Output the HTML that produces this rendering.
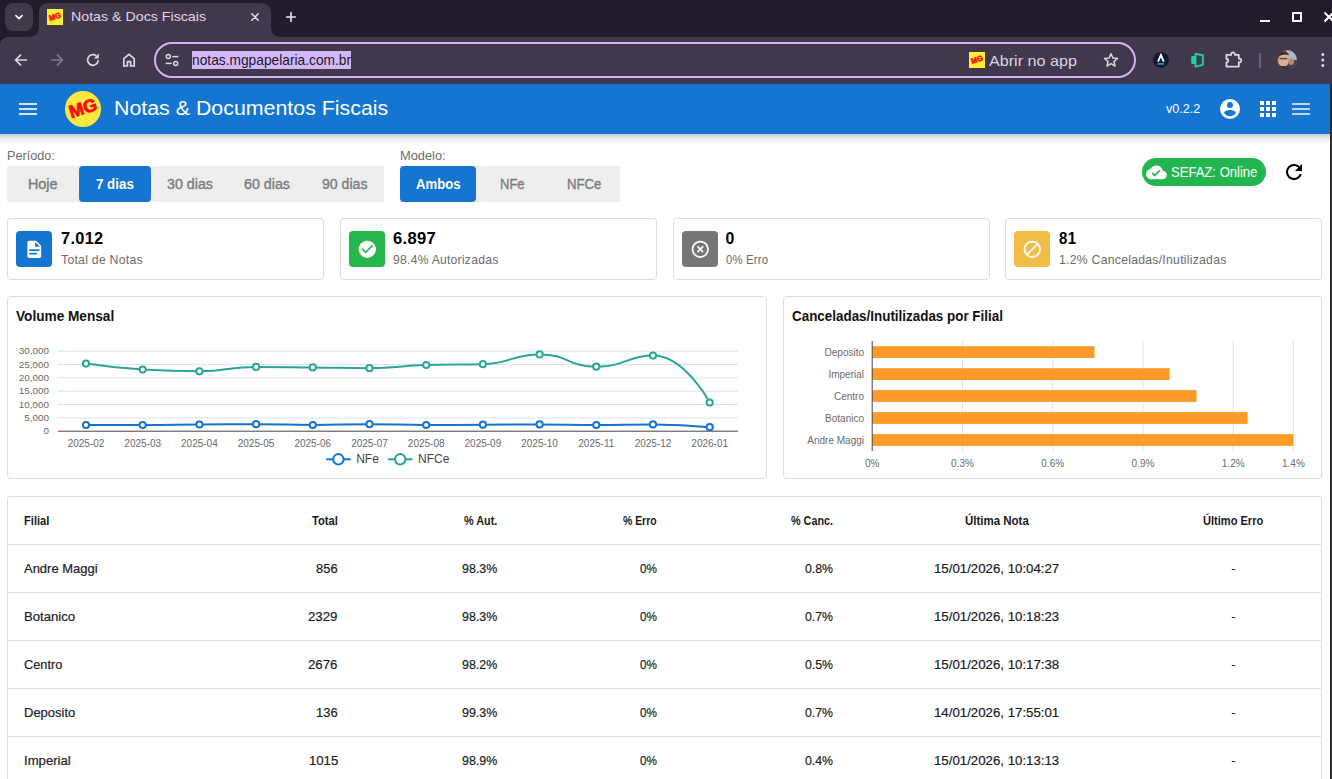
<!DOCTYPE html>
<html lang="pt-BR"><head><meta charset="utf-8"><title>Notas &amp; Docs Fiscais</title>
<style>
*{box-sizing:border-box;margin:0;padding:0}
html,body{width:1332px;height:779px;overflow:hidden;background:#fff;font-family:"Liberation Sans",Arial,sans-serif}
body{position:relative}
.a{position:absolute}
.t{position:absolute;white-space:pre;line-height:20px;height:20px;transform-origin:0 50%}
svg{position:absolute;overflow:visible}
.card{position:absolute;background:#fff;border:1px solid #dcdcdc;border-radius:4px}
.ib{position:absolute;width:36px;height:36px;border-radius:4px;top:231px}
.hl{position:absolute;left:8px;width:1313px;height:1px;background:#dfdfdf}
svg text{font-family:"Liberation Sans",Arial,sans-serif}

</style></head>
<body>
<div class="a" style="left:0;top:0;width:1332px;height:48px;background:#231b2c"></div>
<div class="a" style="left:0;top:37px;width:1340px;height:47px;background:#41384b;border-radius:8px 0 0 0"></div>
<div class="a" style="left:5px;top:3px;width:28px;height:28px;border-radius:8px;background:#41384b"></div>
<svg style="left:13px;top:11px" width="12" height="12" viewBox="0 0 12 12"><path d="M2.9 4.6 6 7.6 9.1 4.6" fill="none" stroke="#fff" stroke-width="1.6" stroke-linecap="round" stroke-linejoin="round"/></svg>
<svg style="left:29px;top:3px" width="254" height="34.5" viewBox="0 0 254 34.5" preserveAspectRatio="none"><path d="M0 34 C6 34 10 30 10 24 V10 C10 4 14 0 20 0 H232 C238 0 242 4 242 10 V24 C242 30 246 34 252 34 Z" fill="#41384b"/></svg>
<svg style="left:47px;top:9px" width="16" height="16" viewBox="0 0 16 16"><rect width="16" height="16" fill="#ffee33"/><g transform="rotate(-18 8 7.5)"><text x="8" y="10.3" font-size="7.8" font-weight="700" fill="#f51010" stroke="#f51010" stroke-width=".55" text-anchor="middle" textLength="12.2" lengthAdjust="spacingAndGlyphs">MG</text></g></svg>
<svg style="left:250px;top:12px" width="10" height="10" viewBox="0 0 10 10"><path d="M1.8 1.8 8.2 8.2M8.2 1.8 1.8 8.2" stroke="#e9e1f0" stroke-width="1.5" stroke-linecap="round"/></svg>
<svg style="left:285px;top:11px" width="12" height="12" viewBox="0 0 12 12"><path d="M6 1.6V10.4M1.6 6H10.4" stroke="#ece5f2" stroke-width="1.6" stroke-linecap="round"/></svg>
<div class="a" style="left:1260px;top:20px;width:10px;height:2px;background:#fff"></div>
<div class="a" style="left:1292px;top:12px;width:10px;height:10px;border:2px solid #fff"></div>
<svg style="left:1324.2px;top:12px" width="10" height="10" viewBox="0 0 10 10"><path d="M0.5 0.5 9.5 9.5M9.5 0.5 0.5 9.5" stroke="#fff" stroke-width="2"/></svg>
<svg style="left:13px;top:52px" width="16" height="16" viewBox="0 0 16 16"><path d="M14 8H2.8M8 2.6 2.6 8 8 13.4" fill="none" stroke="#ded6e6" stroke-width="1.7" stroke-linejoin="miter"/></svg>
<svg style="left:49px;top:52px" width="16" height="16" viewBox="0 0 16 16"><path d="M2 8H13.2M8 2.6 13.4 8 8 13.4" fill="none" stroke="#80778b" stroke-width="1.7"/></svg>
<svg style="left:85px;top:52px" width="16" height="16" viewBox="0 0 16 16"><path d="M13.2 8A5.3 5.3 0 1 1 11.3 3.9" fill="none" stroke="#ded6e6" stroke-width="1.7"/><path d="M13.8 1.6V6.6H8.8Z" fill="#ded6e6"/></svg>
<svg style="left:121px;top:52px" width="16" height="16" viewBox="0 0 16 16"><path d="M2.8 14V6.6L8 2.4 13.2 6.6V14H9.6V9.6H6.4V14Z" fill="none" stroke="#ded6e6" stroke-width="1.7" stroke-linejoin="miter"/></svg>
<div class="a" style="left:154px;top:42px;width:982px;height:36px;border-radius:18px;border:2px solid #d2b3f7;background:#41384b"></div>
<svg style="left:164px;top:52px" width="16" height="16" viewBox="0 0 16 16"><g fill="none" stroke="#ded6e6" stroke-width="1.5"><circle cx="4.3" cy="4.6" r="2"/><path d="M8.3 4.6H14.3"/><circle cx="11.7" cy="11.4" r="2"/><path d="M1.7 11.4H7.7"/></g></svg>
<div class="a" style="left:192px;top:51px;width:159px;height:18px;background:#d4b9fa"></div>
<svg style="left:969px;top:52px" width="16" height="16" viewBox="0 0 16 16"><rect width="16" height="16" fill="#ffee33"/><g transform="rotate(-18 8 7.5)"><text x="8" y="10.3" font-size="7.8" font-weight="700" fill="#f51010" stroke="#f51010" stroke-width=".55" text-anchor="middle" textLength="12.2" lengthAdjust="spacingAndGlyphs">MG</text></g></svg>
<svg style="left:1102px;top:51px" width="18" height="18" viewBox="0 0 24 24"><path d="M12 3.6 14.5 9.3 20.7 9.9 16 14 17.4 20.1 12 16.9 6.6 20.1 8 14 3.3 9.9 9.5 9.3Z" fill="none" stroke="#ded6e6" stroke-width="2" stroke-linejoin="round"/></svg>
<svg style="left:1152px;top:51px" width="18" height="18" viewBox="0 0 18 18"><circle cx="8.9" cy="8.9" r="8" fill="#0f1930"/><path d="M6 10.7 8.9 4.2 11.8 10.7" fill="none" stroke="#fff" stroke-width="1.9" stroke-linejoin="miter"/><path d="M5.6 12.9H12.2" stroke="#2f9fe4" stroke-width="1.6"/></svg>
<svg style="left:1188px;top:51px" width="18" height="18" viewBox="0 0 18 18"><path d="M7.5 2.8 14.8 4.2V13.8L7.5 15.6Z" fill="none" stroke="#1fd19b" stroke-width="1.9" stroke-linejoin="round"/><rect x="3.2" y="4.9" width="4.6" height="8" rx="1.2" fill="#1fd19b"/></svg>
<svg style="left:1224px;top:50px" width="20" height="20" viewBox="0 0 20 20"><path d="M2.4 4.9H7.2a1.9 1.9 0 1 1 3.6 0H14.8V8.7a1.9 1.9 0 1 1 0 3.6V16.6H2.4V12.6a1.8 1.8 0 0 0 0-3.6Z" fill="none" stroke="#ded6e6" stroke-width="1.8" stroke-linejoin="round"/></svg>
<div class="a" style="left:1259.3px;top:52.5px;width:1.4px;height:15px;background:#6b6078"></div>
<svg style="left:1277px;top:50px" width="20" height="20" viewBox="0 0 20 20"><defs><clipPath id="av"><circle cx="10" cy="10" r="10"/></clipPath></defs><g clip-path="url(#av)"><rect width="20" height="20" fill="#6e5a55"/><rect x="9.5" y="0" width="10.5" height="10" fill="#a8b9c4"/><path d="M10 10H20V20H8Z" fill="#4b3f46"/><ellipse cx="6.6" cy="10.2" rx="5.4" ry="6.6" fill="#dcae97"/><path d="M0 6.5C1.5 1 10 .2 12.2 5.2 9 3.8 4 4.2 0 8Z" fill="#3b2c2a"/><path d="M2.4 8.6H10.2" stroke="#5a4038" stroke-width="1.1"/><ellipse cx="14.2" cy="11.8" rx="2.8" ry="3.2" fill="#b58a78"/><path d="M0 20V17.5C3 15.5 9 15.5 12 18V20Z" fill="#3a3038"/></g></svg>
<svg style="left:1320px;top:51px" width="6" height="18" viewBox="0 0 6 18"><circle cx="2.8" cy="3.4" r="1.5" fill="#ded6e6"/><circle cx="2.8" cy="8.9" r="1.5" fill="#ded6e6"/><circle cx="2.8" cy="14.5" r="1.5" fill="#ded6e6"/></svg>
<div class="a" style="left:0;top:84px;width:1330px;height:50px;background:#1576d1"></div>
<div class="a" style="left:0;top:134px;width:1330px;height:11px;background:linear-gradient(to bottom,rgba(0,0,0,.2) 0,rgba(0,0,0,.13) 25%,rgba(0,0,0,.06) 55%,rgba(0,0,0,.02) 80%,rgba(0,0,0,0) 100%)"></div>
<svg style="left:16px;top:97px" width="24" height="24" viewBox="0 0 24 24"><path d="M3,6H21V8H3V6M3,11H21V13H3V11M3,16H21V18H3V16Z" fill="#fff" fill-opacity=".82"/></svg>
<svg style="left:65px;top:91px" width="36" height="36" viewBox="0 0 36 36"><circle cx="18" cy="18" r="18" fill="#ffe83b"/><g transform="rotate(-18 18 17.6)"><text x="18" y="23.2" font-size="17.6" font-weight="700" fill="#f70f12" stroke="#f70f12" stroke-width=".8" text-anchor="middle" textLength="28.5" lengthAdjust="spacingAndGlyphs">MG</text></g></svg>
<svg style="left:1218px;top:97px" width="24" height="24" viewBox="0 0 24 24"><path d="M12,19.2C9.5,19.2 7.29,17.92 6,16C6.03,14 10,12.9 12,12.9C14,12.9 17.97,14 18,16C16.71,17.92 14.5,19.2 12,19.2M12,5A3,3 0 0,1 15,8A3,3 0 0,1 12,11A3,3 0 0,1 9,8A3,3 0 0,1 12,5M12,2A10,10 0 0,0 2,12A10,10 0 0,0 12,22A10,10 0 0,0 22,12C22,6.47 17.5,2 12,2Z" fill="#fff"/></svg>
<svg style="left:1255.5px;top:97px" width="24" height="24" viewBox="0 0 24 24"><path d="M16,20H20V16H16M16,14H20V10H16M10,8H14V4H10M16,8H20V4H16M10,14H14V10H10M4,14H8V10H4M4,20H8V16H4M10,20H14V16H10M4,8H8V4H4V8Z" fill="#fff"/></svg>
<svg style="left:1289px;top:97px" width="24" height="24" viewBox="0 0 24 24"><path d="M3,6H21V8H3V6M3,11H21V13H3V11M3,16H21V18H3V16Z" fill="#fff" fill-opacity=".72"/></svg>
<div class="a" style="left:1330px;top:84px;width:2px;height:695px;background:#2a2a2a"></div>
<div class="a" style="left:7px;top:166px;width:377px;height:36px;background:#eeeeee"></div>
<div class="a" style="left:79px;top:166px;width:72px;height:36px;background:#1576d1;border-radius:4px"></div>
<div class="a" style="left:400px;top:166px;width:220px;height:36px;background:#eeeeee"></div>
<div class="a" style="left:400px;top:166px;width:76px;height:36px;background:#1576d1;border-radius:4px"></div>
<div class="a" style="left:1142px;top:158px;width:124px;height:28px;border-radius:14px;background:#22b650"></div>
<svg style="left:1146.4px;top:161.8px" width="20.8" height="20.8" viewBox="0 0 24 24"><path d="M10,17L6.5,13.5L7.91,12.08L10,14.17L15.18,9L16.59,10.41M19.35,10.03C18.67,6.59 15.64,4 12,4C9.11,4 6.6,5.64 5.35,8.03C2.34,8.36 0,10.9 0,14A6,6 0 0,0 6,20H19A5,5 0 0,0 24,15C24,12.36 21.95,10.22 19.35,10.03Z" fill="#fff" fill-rule="evenodd"/></svg>
<svg style="left:1282px;top:160px" width="24" height="24" viewBox="0 0 24 24"><path d="M17.65,6.35C16.2,4.9 14.21,4 12,4A8,8 0 0,0 4,12A8,8 0 0,0 12,20C15.73,20 18.84,17.45 19.73,14H17.65C16.83,16.33 14.61,18 12,18A6,6 0 0,1 6,12A6,6 0 0,1 12,6C13.66,6 15.14,6.69 16.22,7.78L13,11H20V4L17.65,6.35Z" fill="#000"/></svg>
<div class="card" style="left:7px;top:218px;width:317px;height:62px"></div>
<div class="ib" style="left:16px;background:#1576d1"></div>
<svg style="left:23.7px;top:238.7px" width="20.6" height="20.6" viewBox="0 0 24 24"><path d="M13,9H18.5L13,3.5V9M6,2H14L20,8V20A2,2 0 0,1 18,22H6C4.89,22 4,21.1 4,20V4C4,2.89 4.89,2 6,2M15,18V16H6V18H15M18,14V12H6V14H18Z" fill="#fff" fill-rule="evenodd"/></svg>
<div class="card" style="left:340px;top:218px;width:317px;height:62px"></div>
<div class="ib" style="left:349px;background:#27b64d"></div>
<svg style="left:356.7px;top:238.7px" width="20.6" height="20.6" viewBox="0 0 24 24"><path d="M12 2C6.5 2 2 6.5 2 12S6.5 22 12 22 22 17.5 22 12 17.5 2 12 2M10 17L5 12L6.41 10.59L10 14.17L17.59 6.58L19 8L10 17Z" fill="#fff" fill-rule="evenodd"/></svg>
<div class="card" style="left:673px;top:218px;width:317px;height:62px"></div>
<div class="ib" style="left:682px;background:#767676"></div>
<svg style="left:689.7px;top:238.7px" width="20.6" height="20.6" viewBox="0 0 24 24"><path d="M12,20C7.59,20 4,16.41 4,12C4,7.59 7.59,4 12,4C16.41,4 20,7.59 20,12C20,16.41 16.41,20 12,20M12,2C6.47,2 2,6.47 2,12C2,17.53 6.47,22 12,22C17.53,22 22,17.53 22,12C22,6.47 17.53,2 12,2M14.59,8L12,10.59L9.41,8L8,9.41L10.59,12L8,14.59L9.41,16L12,13.41L14.59,16L16,14.59L13.41,12L16,9.41L14.59,8Z" fill="#fff" fill-rule="evenodd"/></svg>
<div class="card" style="left:1005px;top:218px;width:317px;height:62px"></div>
<div class="ib" style="left:1014px;background:#f0be48"></div>
<svg style="left:1021.7px;top:238.7px" width="20.6" height="20.6" viewBox="0 0 24 24"><path d="M12 2C17.5 2 22 6.5 22 12S17.5 22 12 22 2 17.5 2 12 6.5 2 12 2M12 4C10.1 4 8.4 4.6 7.1 5.7L18.3 16.9C19.3 15.5 20 13.8 20 12C20 7.6 16.4 4 12 4M16.9 18.3L5.7 7.1C4.6 8.4 4 10.1 4 12C4 16.4 7.6 20 12 20C13.9 20 15.6 19.4 16.9 18.3Z" fill="#fff" fill-rule="evenodd" transform="translate(24 0) scale(-1 1)"/></svg>
<div class="card" style="left:7px;top:296px;width:760px;height:183px"></div>
<div class="card" style="left:783px;top:296px;width:539px;height:183px"></div>
<svg style="left:0;top:0" width="1332" height="779" viewBox="0 0 1332 779">
<path d="M58 417.9H738" stroke="#dde1e9" stroke-width="1" fill="none"/>
<path d="M58 404.5H738" stroke="#dde1e9" stroke-width="1" fill="none"/>
<path d="M58 391.2H738" stroke="#dde1e9" stroke-width="1" fill="none"/>
<path d="M58 377.9H738" stroke="#dde1e9" stroke-width="1" fill="none"/>
<path d="M58 364.5H738" stroke="#dde1e9" stroke-width="1" fill="none"/>
<path d="M58 351.2H738" stroke="#dde1e9" stroke-width="1" fill="none"/>
<path d="M58 431.2H738" stroke="#444" stroke-width="1" fill="none"/>
<text x="48.9" y="434.4" font-size="9.9" fill="#6a6a6a" text-anchor="end">0</text>
<text x="48.9" y="421.1" font-size="9.9" fill="#6a6a6a" text-anchor="end">5,000</text>
<text x="48.9" y="407.7" font-size="9.9" fill="#6a6a6a" text-anchor="end">10,000</text>
<text x="48.9" y="394.4" font-size="9.9" fill="#6a6a6a" text-anchor="end">15,000</text>
<text x="48.9" y="381.1" font-size="9.9" fill="#6a6a6a" text-anchor="end">20,000</text>
<text x="48.9" y="367.7" font-size="9.9" fill="#6a6a6a" text-anchor="end">25,000</text>
<text x="48.9" y="354.4" font-size="9.9" fill="#6a6a6a" text-anchor="end">30,000</text>
<text x="86.0" y="447.1" font-size="10" fill="#6a6a6a" text-anchor="middle">2025-02</text>
<text x="142.7" y="447.1" font-size="10" fill="#6a6a6a" text-anchor="middle">2025-03</text>
<text x="199.4" y="447.1" font-size="10" fill="#6a6a6a" text-anchor="middle">2025-04</text>
<text x="256.1" y="447.1" font-size="10" fill="#6a6a6a" text-anchor="middle">2025-05</text>
<text x="312.8" y="447.1" font-size="10" fill="#6a6a6a" text-anchor="middle">2025-06</text>
<text x="369.5" y="447.1" font-size="10" fill="#6a6a6a" text-anchor="middle">2025-07</text>
<text x="426.2" y="447.1" font-size="10" fill="#6a6a6a" text-anchor="middle">2025-08</text>
<text x="482.9" y="447.1" font-size="10" fill="#6a6a6a" text-anchor="middle">2025-09</text>
<text x="539.6" y="447.1" font-size="10" fill="#6a6a6a" text-anchor="middle">2025-10</text>
<text x="596.3" y="447.1" font-size="10" fill="#6a6a6a" text-anchor="middle">2025-11</text>
<text x="653.0" y="447.1" font-size="10" fill="#6a6a6a" text-anchor="middle">2025-12</text>
<text x="709.7" y="447.1" font-size="10" fill="#6a6a6a" text-anchor="middle">2026-01</text>
<path d="M86.0 425.0C86.0 425.0 114.4 425.0 142.7 425.0C171.1 425.0 171.0 424.7 199.4 424.5C227.7 424.3 227.8 424.2 256.1 424.2C284.5 424.2 284.5 425.0 312.8 425.0C341.1 425.0 341.1 424.2 369.5 424.2C397.9 424.2 397.8 425.0 426.2 425.0C454.5 425.0 454.6 424.9 482.9 424.7C511.2 424.5 511.3 424.4 539.6 424.4C568.0 424.4 568.0 425.0 596.3 425.0C624.6 425.0 624.7 424.4 653.0 424.4C681.4 424.4 709.7 427.2 709.7 427.2" fill="none" stroke="#1673d6" stroke-width="2" stroke-linejoin="round"/>
<circle cx="86.0" cy="425.0" r="3.1" fill="#fff" stroke="#1673d6" stroke-width="2"/>
<circle cx="142.7" cy="425.0" r="3.1" fill="#fff" stroke="#1673d6" stroke-width="2"/>
<circle cx="199.4" cy="424.5" r="3.1" fill="#fff" stroke="#1673d6" stroke-width="2"/>
<circle cx="256.1" cy="424.2" r="3.1" fill="#fff" stroke="#1673d6" stroke-width="2"/>
<circle cx="312.8" cy="425.0" r="3.1" fill="#fff" stroke="#1673d6" stroke-width="2"/>
<circle cx="369.5" cy="424.2" r="3.1" fill="#fff" stroke="#1673d6" stroke-width="2"/>
<circle cx="426.2" cy="425.0" r="3.1" fill="#fff" stroke="#1673d6" stroke-width="2"/>
<circle cx="482.9" cy="424.7" r="3.1" fill="#fff" stroke="#1673d6" stroke-width="2"/>
<circle cx="539.6" cy="424.4" r="3.1" fill="#fff" stroke="#1673d6" stroke-width="2"/>
<circle cx="596.3" cy="425.0" r="3.1" fill="#fff" stroke="#1673d6" stroke-width="2"/>
<circle cx="653.0" cy="424.4" r="3.1" fill="#fff" stroke="#1673d6" stroke-width="2"/>
<circle cx="709.7" cy="427.2" r="3.1" fill="#fff" stroke="#1673d6" stroke-width="2"/>
<path d="M86.0 363.6C86.0 363.6 114.3 367.9 142.7 369.6C171.0 371.3 171.1 371.3 199.4 371.3C227.8 371.3 227.7 366.9 256.1 366.9C284.4 366.9 284.5 367.1 312.8 367.4C341.2 367.7 341.2 368.2 369.5 368.2C397.9 368.2 397.8 365.8 426.2 365.0C454.5 364.2 454.8 365.0 482.9 364.2C511.5 363.4 511.4 354.4 539.6 354.4C568.1 354.4 567.9 366.7 596.3 366.7C624.6 366.7 628.1 355.6 653.0 355.6C684.8 355.6 709.7 402.5 709.7 402.5" fill="none" stroke="#2aa597" stroke-width="2" stroke-linejoin="round"/>
<circle cx="86.0" cy="363.6" r="3.1" fill="#fff" stroke="#2aa597" stroke-width="2"/>
<circle cx="142.7" cy="369.6" r="3.1" fill="#fff" stroke="#2aa597" stroke-width="2"/>
<circle cx="199.4" cy="371.3" r="3.1" fill="#fff" stroke="#2aa597" stroke-width="2"/>
<circle cx="256.1" cy="366.9" r="3.1" fill="#fff" stroke="#2aa597" stroke-width="2"/>
<circle cx="312.8" cy="367.4" r="3.1" fill="#fff" stroke="#2aa597" stroke-width="2"/>
<circle cx="369.5" cy="368.2" r="3.1" fill="#fff" stroke="#2aa597" stroke-width="2"/>
<circle cx="426.2" cy="365.0" r="3.1" fill="#fff" stroke="#2aa597" stroke-width="2"/>
<circle cx="482.9" cy="364.2" r="3.1" fill="#fff" stroke="#2aa597" stroke-width="2"/>
<circle cx="539.6" cy="354.4" r="3.1" fill="#fff" stroke="#2aa597" stroke-width="2"/>
<circle cx="596.3" cy="366.7" r="3.1" fill="#fff" stroke="#2aa597" stroke-width="2"/>
<circle cx="653.0" cy="355.6" r="3.1" fill="#fff" stroke="#2aa597" stroke-width="2"/>
<circle cx="709.7" cy="402.5" r="3.1" fill="#fff" stroke="#2aa597" stroke-width="2"/>
<path d="M326.2 459.3H350.7" stroke="#1673d6" stroke-width="2"/>
<circle cx="338.4" cy="459.3" r="5.2" fill="#fff" stroke="#1673d6" stroke-width="2"/>
<text x="356.2" y="463.4" font-size="12" fill="#444">NFe</text>
<path d="M388.0 459.3H412.5" stroke="#2aa597" stroke-width="2"/>
<circle cx="400.2" cy="459.3" r="5.2" fill="#fff" stroke="#2aa597" stroke-width="2"/>
<text x="418.0" y="463.4" font-size="12" fill="#444">NFCe</text>
<text x="872.2" y="467.1" font-size="10" fill="#6a6a6a" text-anchor="middle">0%</text>
<path d="M962.5 341V451" stroke="#dde1e9" stroke-width="1" fill="none"/>
<text x="962.5" y="467.1" font-size="10" fill="#6a6a6a" text-anchor="middle">0.3%</text>
<path d="M1052.7 341V451" stroke="#dde1e9" stroke-width="1" fill="none"/>
<text x="1052.7" y="467.1" font-size="10" fill="#6a6a6a" text-anchor="middle">0.6%</text>
<path d="M1143.0 341V451" stroke="#dde1e9" stroke-width="1" fill="none"/>
<text x="1143.0" y="467.1" font-size="10" fill="#6a6a6a" text-anchor="middle">0.9%</text>
<path d="M1233.2 341V451" stroke="#dde1e9" stroke-width="1" fill="none"/>
<text x="1233.2" y="467.1" font-size="10" fill="#6a6a6a" text-anchor="middle">1.2%</text>
<path d="M1293.4 341V451" stroke="#dde1e9" stroke-width="1" fill="none"/>
<text x="1293.4" y="467.1" font-size="10" fill="#6a6a6a" text-anchor="middle">1.4%</text>
<rect x="872.2" y="346.2" width="222.3" height="11.8" fill="#fd9a29"/>
<text x="864" y="355.6" font-size="10" fill="#6a6a6a" text-anchor="end">Deposito</text>
<rect x="872.2" y="368.2" width="297.4" height="11.8" fill="#fd9a29"/>
<text x="864" y="377.6" font-size="10" fill="#6a6a6a" text-anchor="end">Imperial</text>
<rect x="872.2" y="390.1" width="324.4" height="11.8" fill="#fd9a29"/>
<text x="864" y="399.5" font-size="10" fill="#6a6a6a" text-anchor="end">Centro</text>
<rect x="872.2" y="412.1" width="375.4" height="11.8" fill="#fd9a29"/>
<text x="864" y="421.5" font-size="10" fill="#6a6a6a" text-anchor="end">Botanico</text>
<rect x="872.2" y="434.1" width="421.1" height="11.8" fill="#fd9a29"/>
<text x="864" y="443.5" font-size="10" fill="#6a6a6a" text-anchor="end">Andre Maggi</text>
<path d="M872.2 341V451" stroke="#444" stroke-width="1" fill="none"/>
</svg>
<div class="card" style="left:7px;top:496px;width:1315px;height:300px;border-bottom:none"></div>
<div class="hl" style="top:544px"></div>
<div class="hl" style="top:592px"></div>
<div class="hl" style="top:640px"></div>
<div class="hl" style="top:688px"></div>
<div class="hl" style="top:736px"></div>
<span class="t" style="left:70.76px;top:6.82px;font-size:13.5px;color:#e0d8e8;transform:scaleX(1.0526);">Notas &amp; Docs Fiscais</span>
<span class="t" style="left:191.88px;top:49.60px;font-size:15px;color:#1d1527;transform:scaleX(0.9174);">notas.mgpapelaria.com.br</span>
<span class="t" style="left:988.87px;top:50.60px;font-size:15px;color:#dcd3e4;transform:scaleX(1.0760);">Abrir no app</span>
<span class="t" style="left:114.04px;top:97.87px;font-size:20px;color:#fff;transform:scaleX(1.0681);">Notas &amp; Documentos Fiscais</span>
<span class="t" style="left:1165.83px;top:98.59px;font-size:12px;color:#fff;transform:scaleX(1.0509);">v0.2.2</span>
<span class="t" style="left:6.63px;top:145.80px;font-size:13px;color:#6d6d6d;transform:scaleX(0.9718);">Período:</span>
<span class="t" style="left:399.72px;top:145.80px;font-size:13px;color:#6d6d6d;transform:scaleX(0.9876);">Modelo:</span>
<span class="t" style="left:27.85px;top:173.75px;font-size:14px;color:#7b7b7b;transform:scaleX(1.0260);-webkit-text-stroke:0.35px #7b7b7b;">Hoje</span>
<span class="t" style="left:96.10px;top:173.75px;font-size:14px;color:#fff;transform:scaleX(0.9521);font-weight:700;">7 dias</span>
<span class="t" style="left:166.66px;top:173.75px;font-size:14px;color:#7b7b7b;transform:scaleX(1.0174);-webkit-text-stroke:0.35px #7b7b7b;">30 dias</span>
<span class="t" style="left:244.06px;top:173.75px;font-size:14px;color:#7b7b7b;transform:scaleX(1.0174);-webkit-text-stroke:0.35px #7b7b7b;">60 dias</span>
<span class="t" style="left:321.87px;top:173.75px;font-size:14px;color:#7b7b7b;transform:scaleX(1.0061);-webkit-text-stroke:0.35px #7b7b7b;">90 dias</span>
<span class="t" style="left:415.51px;top:173.75px;font-size:14px;color:#fff;transform:scaleX(0.9376);font-weight:700;">Ambos</span>
<span class="t" style="left:499.81px;top:173.75px;font-size:14px;color:#7b7b7b;transform:scaleX(0.9294);-webkit-text-stroke:0.35px #7b7b7b;">NFe</span>
<span class="t" style="left:566.81px;top:173.75px;font-size:14px;color:#7b7b7b;transform:scaleX(0.9407);-webkit-text-stroke:0.35px #7b7b7b;">NFCe</span>
<span class="t" style="left:1171.41px;top:161.75px;font-size:14px;color:#fff;transform:scaleX(0.9330);">SEFAZ: Online</span>
<span class="t" style="left:60.86px;top:228.73px;font-size:15.8px;color:#000;transform:scaleX(1.0345);letter-spacing:0.300px;font-weight:700;">7.012</span>
<span class="t" style="left:61.05px;top:250.27px;font-size:12.2px;color:#6c6c6c;transform:scaleX(1.0059);letter-spacing:0.250px;">Total de Notas</span>
<span class="t" style="left:392.85px;top:228.73px;font-size:15.8px;color:#000;transform:scaleX(1.0495);letter-spacing:0.300px;font-weight:700;">6.897</span>
<span class="t" style="left:393.05px;top:250.27px;font-size:12.2px;color:#6c6c6c;transform:scaleX(0.9963);letter-spacing:0.250px;">98.4% Autorizadas</span>
<span class="t" style="left:725.59px;top:228.73px;font-size:15.8px;color:#000;transform:scaleX(1.0000);letter-spacing:0.300px;font-weight:700;">0</span>
<span class="t" style="left:725.79px;top:250.27px;font-size:12.2px;color:#6c6c6c;transform:scaleX(0.9248);letter-spacing:0.250px;">0% Erro</span>
<span class="t" style="left:1058.52px;top:228.73px;font-size:15.8px;color:#000;transform:scaleX(0.9495);letter-spacing:0.300px;font-weight:700;">81</span>
<span class="t" style="left:1058.65px;top:250.27px;font-size:12.2px;color:#6c6c6c;transform:scaleX(1.0043);letter-spacing:0.250px;">1.2% Canceladas/Inutilizadas</span>
<span class="t" style="left:15.59px;top:306.05px;font-size:14px;color:#111;transform:scaleX(0.9735);font-weight:700;">Volume Mensal</span>
<span class="t" style="left:792.40px;top:306.05px;font-size:14px;color:#111;transform:scaleX(0.9579);font-weight:700;">Canceladas/Inutilizadas por Filial</span>
<span class="t" style="left:23.80px;top:511.04px;font-size:12px;color:#1a1a1a;transform:scaleX(0.9290);font-weight:700;">Filial</span>
<span class="t" style="left:311.90px;top:511.04px;font-size:12px;color:#1a1a1a;transform:scaleX(0.9324);font-weight:700;">Total</span>
<span class="t" style="left:464.11px;top:511.04px;font-size:12px;color:#1a1a1a;transform:scaleX(0.9023);font-weight:700;">% Aut.</span>
<span class="t" style="left:623.43px;top:511.04px;font-size:12px;color:#1a1a1a;transform:scaleX(0.8677);font-weight:700;">% Erro</span>
<span class="t" style="left:790.51px;top:511.04px;font-size:12px;color:#1a1a1a;transform:scaleX(0.9015);font-weight:700;">% Canc.</span>
<span class="t" style="left:965.28px;top:511.04px;font-size:12px;color:#1a1a1a;transform:scaleX(0.9570);font-weight:700;">Última Nota</span>
<span class="t" style="left:1203.40px;top:511.04px;font-size:12px;color:#1a1a1a;transform:scaleX(0.9212);font-weight:700;">Último Erro</span>
<span class="t" style="left:23.72px;top:558.60px;font-size:13px;color:#1c1c1c;transform:scaleX(0.9982);-webkit-text-stroke:0.2px #1c1c1c;">Andre Maggi</span>
<span class="t" style="left:316.22px;top:558.60px;font-size:13px;color:#1c1c1c;transform:scaleX(0.9944);-webkit-text-stroke:0.2px #1c1c1c;">856</span>
<span class="t" style="left:462.14px;top:558.60px;font-size:13px;color:#1c1c1c;transform:scaleX(0.9562);-webkit-text-stroke:0.2px #1c1c1c;">98.3%</span>
<span class="t" style="left:640.07px;top:558.60px;font-size:13px;color:#1c1c1c;transform:scaleX(0.9005);-webkit-text-stroke:0.2px #1c1c1c;">0%</span>
<span class="t" style="left:804.65px;top:558.60px;font-size:13px;color:#1c1c1c;transform:scaleX(0.9430);-webkit-text-stroke:0.2px #1c1c1c;">0.8%</span>
<span class="t" style="left:934.40px;top:558.60px;font-size:13px;color:#1c1c1c;transform:scaleX(1.0188);-webkit-text-stroke:0.2px #1c1c1c;">15/01/2026, 10:04:27</span>
<span class="t" style="left:1231.21px;top:558.60px;font-size:13px;color:#1c1c1c;transform:scaleX(1.0000);">-</span>
<span class="t" style="left:23.71px;top:606.60px;font-size:13px;color:#1c1c1c;transform:scaleX(1.0118);-webkit-text-stroke:0.2px #1c1c1c;">Botanico</span>
<span class="t" style="left:308.30px;top:606.60px;font-size:13px;color:#1c1c1c;transform:scaleX(1.0199);-webkit-text-stroke:0.2px #1c1c1c;">2329</span>
<span class="t" style="left:462.14px;top:606.60px;font-size:13px;color:#1c1c1c;transform:scaleX(0.9562);-webkit-text-stroke:0.2px #1c1c1c;">98.3%</span>
<span class="t" style="left:640.07px;top:606.60px;font-size:13px;color:#1c1c1c;transform:scaleX(0.9005);-webkit-text-stroke:0.2px #1c1c1c;">0%</span>
<span class="t" style="left:804.65px;top:606.60px;font-size:13px;color:#1c1c1c;transform:scaleX(0.9430);-webkit-text-stroke:0.2px #1c1c1c;">0.7%</span>
<span class="t" style="left:934.40px;top:606.60px;font-size:13px;color:#1c1c1c;transform:scaleX(1.0188);-webkit-text-stroke:0.2px #1c1c1c;">15/01/2026, 10:18:23</span>
<span class="t" style="left:1231.21px;top:606.60px;font-size:13px;color:#1c1c1c;transform:scaleX(1.0000);">-</span>
<span class="t" style="left:23.73px;top:654.60px;font-size:13px;color:#1c1c1c;transform:scaleX(0.9806);-webkit-text-stroke:0.2px #1c1c1c;">Centro</span>
<span class="t" style="left:308.30px;top:654.60px;font-size:13px;color:#1c1c1c;transform:scaleX(1.0199);-webkit-text-stroke:0.2px #1c1c1c;">2676</span>
<span class="t" style="left:462.14px;top:654.60px;font-size:13px;color:#1c1c1c;transform:scaleX(0.9562);-webkit-text-stroke:0.2px #1c1c1c;">98.2%</span>
<span class="t" style="left:640.07px;top:654.60px;font-size:13px;color:#1c1c1c;transform:scaleX(0.9005);-webkit-text-stroke:0.2px #1c1c1c;">0%</span>
<span class="t" style="left:804.65px;top:654.60px;font-size:13px;color:#1c1c1c;transform:scaleX(0.9430);-webkit-text-stroke:0.2px #1c1c1c;">0.5%</span>
<span class="t" style="left:934.40px;top:654.60px;font-size:13px;color:#1c1c1c;transform:scaleX(1.0188);-webkit-text-stroke:0.2px #1c1c1c;">15/01/2026, 10:17:38</span>
<span class="t" style="left:1231.21px;top:654.60px;font-size:13px;color:#1c1c1c;transform:scaleX(1.0000);">-</span>
<span class="t" style="left:23.72px;top:702.60px;font-size:13px;color:#1c1c1c;transform:scaleX(0.9995);-webkit-text-stroke:0.2px #1c1c1c;">Deposito</span>
<span class="t" style="left:316.22px;top:702.60px;font-size:13px;color:#1c1c1c;transform:scaleX(0.9944);-webkit-text-stroke:0.2px #1c1c1c;">136</span>
<span class="t" style="left:462.14px;top:702.60px;font-size:13px;color:#1c1c1c;transform:scaleX(0.9562);-webkit-text-stroke:0.2px #1c1c1c;">99.3%</span>
<span class="t" style="left:640.07px;top:702.60px;font-size:13px;color:#1c1c1c;transform:scaleX(0.9005);-webkit-text-stroke:0.2px #1c1c1c;">0%</span>
<span class="t" style="left:804.65px;top:702.60px;font-size:13px;color:#1c1c1c;transform:scaleX(0.9430);-webkit-text-stroke:0.2px #1c1c1c;">0.7%</span>
<span class="t" style="left:934.40px;top:702.60px;font-size:13px;color:#1c1c1c;transform:scaleX(1.0188);-webkit-text-stroke:0.2px #1c1c1c;">14/01/2026, 17:55:01</span>
<span class="t" style="left:1231.21px;top:702.60px;font-size:13px;color:#1c1c1c;transform:scaleX(1.0000);">-</span>
<span class="t" style="left:23.71px;top:750.60px;font-size:13px;color:#1c1c1c;transform:scaleX(1.0117);-webkit-text-stroke:0.2px #1c1c1c;">Imperial</span>
<span class="t" style="left:308.61px;top:750.60px;font-size:13px;color:#1c1c1c;transform:scaleX(1.0093);-webkit-text-stroke:0.2px #1c1c1c;">1015</span>
<span class="t" style="left:462.14px;top:750.60px;font-size:13px;color:#1c1c1c;transform:scaleX(0.9562);-webkit-text-stroke:0.2px #1c1c1c;">98.9%</span>
<span class="t" style="left:640.07px;top:750.60px;font-size:13px;color:#1c1c1c;transform:scaleX(0.9005);-webkit-text-stroke:0.2px #1c1c1c;">0%</span>
<span class="t" style="left:804.65px;top:750.60px;font-size:13px;color:#1c1c1c;transform:scaleX(0.9430);-webkit-text-stroke:0.2px #1c1c1c;">0.4%</span>
<span class="t" style="left:934.40px;top:750.60px;font-size:13px;color:#1c1c1c;transform:scaleX(1.0188);-webkit-text-stroke:0.2px #1c1c1c;">15/01/2026, 10:13:13</span>
<span class="t" style="left:1231.21px;top:750.60px;font-size:13px;color:#1c1c1c;transform:scaleX(1.0000);">-</span>
</body></html>
